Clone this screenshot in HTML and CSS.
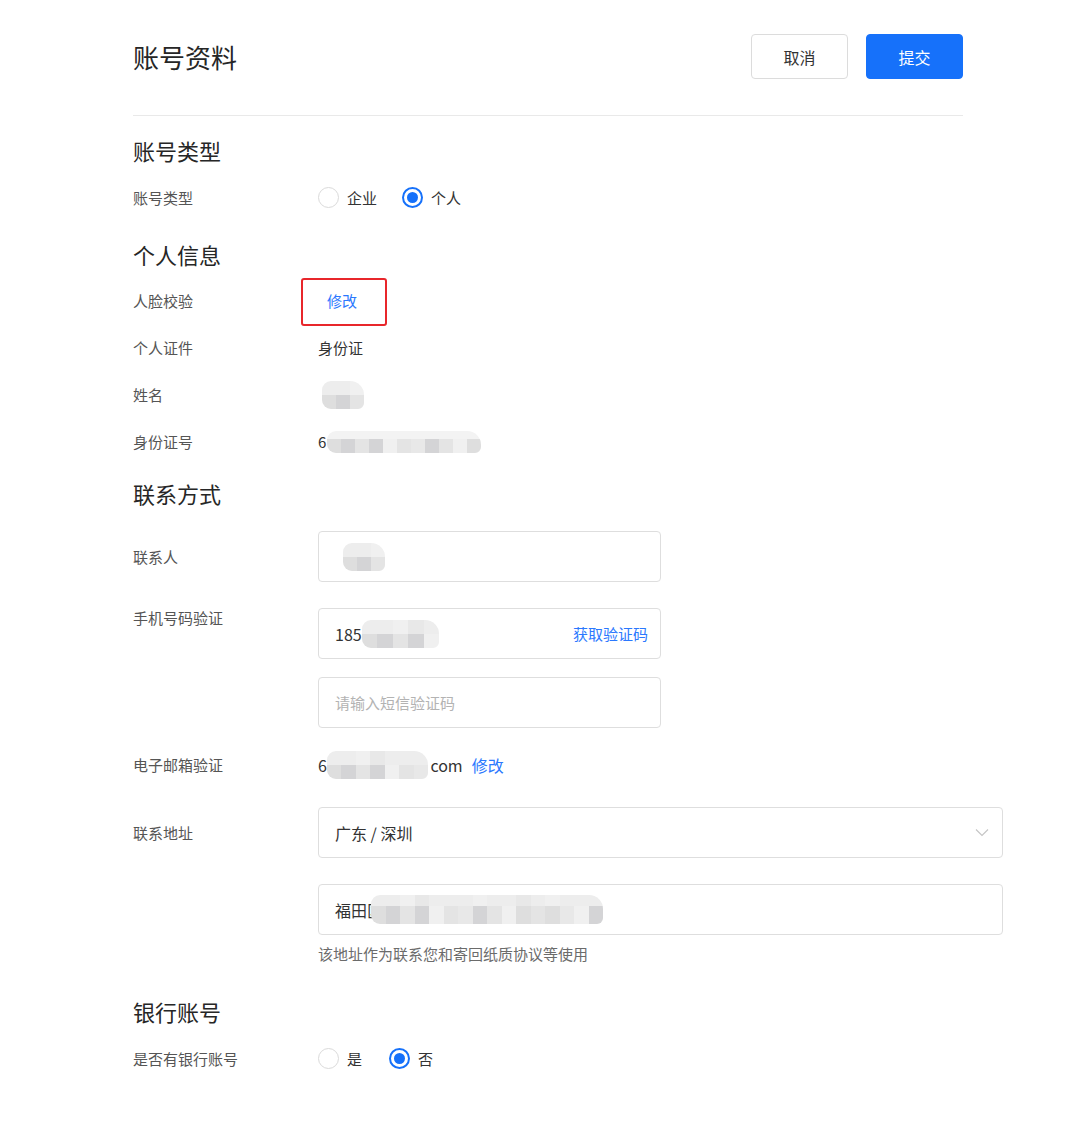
FILE: index.html
```html
<!DOCTYPE html>
<html lang="zh-CN">
<head>
<meta charset="utf-8">
<title>账号资料</title>
<link rel="stylesheet" href="styles.css">
</head>
<body>
<div class="page">
  <header class="header">
    <h1 class="title">账号资料</h1>
    <div class="actions">
      <button class="btn btn-default">取消</button>
      <button class="btn btn-primary">提交</button>
    </div>
  </header>
  <div class="divider"></div>

  <h2 class="section-title s1">账号类型</h2>
  <div class="row">
    <div class="label">账号类型</div>
    <div class="value radios">
      <label class="radio"><span class="dot"></span>企业</label>
      <label class="radio checked"><span class="dot"></span>个人</label>
    </div>
  </div>

  <h2 class="section-title s2">个人信息</h2>
  <div class="info">
    <div class="row">
      <div class="label">人脸校验</div>
      <div class="value"><span class="mark"><a class="link">修改</a><span class="mark-box"></span></span></div>
    </div>
    <div class="row">
      <div class="label">个人证件</div>
      <div class="value">身份证</div>
    </div>
    <div class="row">
      <div class="label">姓名</div>
      <div class="value"><span class="mosaic m3"><i></i><i></i><i></i><i></i><i></i><i></i></span></div>
    </div>
    <div class="row">
      <div class="label">身份证号</div>
      <div class="value">6<span class="mosaic m11 flat"><i></i><i></i><i></i><i></i><i></i><i></i><i></i><i></i><i></i><i></i><i></i><i></i><i></i><i></i><i></i><i></i><i></i><i></i><i></i><i></i><i></i><i></i></span></div>
    </div>
  </div>

  <h2 class="section-title s3">联系方式</h2>
  <div class="form-row r-contact">
    <div class="label lh-mid">联系人</div>
    <div class="field">
      <div class="input"><span class="mosaic m3"><i></i><i></i><i></i><i></i><i></i><i></i></span></div>
    </div>
  </div>
  <div class="form-row r-phone">
    <div class="label lh-top">手机号码验证</div>
    <div class="field stack">
      <div class="input"><span class="txt">185</span><span class="mosaic m5"><i></i><i></i><i></i><i></i><i></i><i></i><i></i><i></i><i></i><i></i></span><a class="link suffix">获取验证码</a></div>
      <div class="input"><span class="placeholder">请输入短信验证码</span></div>
    </div>
  </div>
  <div class="form-row r-email">
    <div class="label lh-top">电子邮箱验证</div>
    <div class="value email">6<span class="mosaic m7"><i></i><i></i><i></i><i></i><i></i><i></i><i></i><i></i><i></i><i></i><i></i><i></i><i></i><i></i></span>com<a class="link">修改</a></div>
  </div>
  <div class="form-row r-address">
    <div class="label lh-mid">联系地址</div>
    <div class="field wide stack">
      <div class="input select"><span class="txt">广东 / 深圳</span>
        <svg class="chev" width="14" height="9" viewBox="0 0 14 9"><path d="M1 1.5 L7 7.5 L13 1.5" fill="none" stroke="#c4c4c4" stroke-width="1.1"/></svg>
      </div>
      <div class="input"><span class="txt">福田区</span><span class="mosaic m16 over"><i></i><i></i><i></i><i></i><i></i><i></i><i></i><i></i><i></i><i></i><i></i><i></i><i></i><i></i><i></i><i></i><i></i><i></i><i></i><i></i><i></i><i></i><i></i><i></i><i></i><i></i><i></i><i></i><i></i><i></i><i></i><i></i></span></div>
    </div>
  </div>
  <div class="hint">该地址作为联系您和寄回纸质协议等使用</div>

  <h2 class="section-title s4">银行账号</h2>
  <div class="row">
    <div class="label">是否有银行账号</div>
    <div class="value radios tight">
      <label class="radio"><span class="dot"></span>是</label>
      <label class="radio checked"><span class="dot"></span>否</label>
    </div>
  </div>
</div>
</body>
</html>
```

FILE: styles.css
```css
* { box-sizing: border-box; }
html, body { margin: 0; padding: 0; background: #fff; }
body {
  font-family: "Microsoft YaHei", "Noto Sans CJK SC", "Noto Sans", sans-serif;
  color: #333;
  font-size: 15px;
}
.page {
  width: 830px;
  margin-left: 133px;
  padding-top: 34px;
  padding-bottom: 40px;
}
.header {
  display: flex;
  justify-content: space-between;
  align-items: center;
  height: 45px;
}
.title {
  margin: 0;
  font-size: 26px;
  font-weight: 400;
  color: #262626;
  line-height: 45px;
}
.actions { display: flex; gap: 18px; }
.btn {
  width: 97px;
  height: 45px;
  border-radius: 4px;
  font-family: inherit;
  font-size: 16px;
  cursor: pointer;
}
.btn-default { background: #fff; border: 1px solid #dcdcdc; color: #333; }
.btn-primary { background: #1671fa; border: 1px solid #1671fa; color: #fff; }
.divider { height: 1px; background: #e9e9e9; margin-top: 36px; }

.section-title {
  margin: 0;
  font-size: 22px;
  font-weight: 400;
  color: #262626;
  line-height: 30px;
}
.s1 { margin-top: 19px; }
.s2 { margin-top: 18px; }
.s3 { margin-top: 13px; }
.s4 { margin-top: 32px; }

.row {
  display: flex;
  align-items: center;
  height: 47px;
  margin-top: 9px;
}
.info .row { margin-top: 0; }
.info { margin-top: 8px; }
.label {
  width: 185px;
  flex: none;
  color: #555;
  font-size: 15px;
  line-height: 20px;
}
.value { font-size: 15px; color: #333; display: flex; align-items: center; }

.radios { gap: 25px; }
.radios.tight { gap: 27px; }
.radio { display: flex; align-items: center; gap: 8px; color: #333; }
.dot {
  width: 21px; height: 21px;
  border-radius: 50%;
  border: 1px solid #dadada;
  background: #fff;
  display: inline-block;
  position: relative;
}
.radio.checked .dot { border: 2px solid #1671fa; }
.radio.checked .dot::after {
  content: "";
  position: absolute;
  left: 50%; top: 50%;
  width: 11px; height: 11px;
  margin: -5.5px 0 0 -5.5px;
  border-radius: 50%;
  background: #1671fa;
}

.link { color: #2b78fe; text-decoration: none; cursor: pointer; }
.mark { position: relative; display: inline-block; padding-left: 9px; }
.mark-box {
  position: absolute;
  left: -17px; top: -12px;
  width: 86px; height: 48px;
  border: 2px solid #e8262b;
  border-radius: 3px;
}

/* mosaic placeholders for blurred personal data */
.mosaic {
  display: inline-grid;
  grid-template-rows: 14px 14px;
  grid-auto-flow: column;
  grid-auto-columns: 14px;
  border-radius: 9px 14px 6px 9px;
  overflow: hidden;
  filter: blur(0.6px);
  vertical-align: middle;
}
.mosaic i { display: block; background: #ededed; }
.mosaic i:nth-child(2n) { background: #dedede; }
.mosaic i:nth-child(4n) { background: #d4d4d6; }
.mosaic i:nth-child(6n) { background: #e4e4e4; }
.mosaic i:nth-child(5n) { background: #f0f0f0; }
.mosaic i:nth-child(7n) { background: #e8e8e8; }
.mosaic.m3 { margin-left: 4px; }
.mosaic.flat { grid-template-rows: 8px 14px; margin-left: 1px; }
.mosaic.flat i:nth-child(2n+1) { background: #f3f3f3; }
.mosaic.m5 { margin-left: 0; grid-auto-columns: 15.5px; }
.mosaic.m7 { grid-auto-columns: 14.5px; margin-right: 2px; }
.mosaic.over { margin-left: -12px; grid-auto-columns: 14.5px; grid-template-rows: 11px 18px; }

/* form */
.form-row { display: flex; align-items: flex-start; }
.r-contact { margin-top: 23px; }
.r-phone { margin-top: 26px; }
.r-email { margin-top: 27px; height: 20px; align-items: center; }
.r-address { margin-top: 32px; }
.lh-mid { line-height: 51px; }
.lh-top { line-height: 20px; }
.field { width: 343px; flex: none; }
.field.wide { width: 685px; }
.stack { display: flex; flex-direction: column; gap: 18px; }
.r-address .stack { gap: 26px; }
.input {
  height: 51px;
  border: 1px solid #dedede;
  border-radius: 4px;
  display: flex;
  align-items: center;
  padding: 0 12px 0 16px;
  font-size: 16px;
  color: #333;
  background: #fff;
}
.r-contact .input { padding-left: 20px; }
.placeholder { color: #b3b3b3; font-size: 15px; }
.suffix { margin-left: auto; font-size: 15px; }
.select .chev { margin-left: auto; margin-right: 1px; }
.email { font-size: 16px; color: #333; }
.email .link { margin-left: 9px; }
.hint {
  margin-left: 185px;
  margin-top: 9px;
  line-height: 20px;
  font-size: 15px;
  color: #6b6b6b;
}
```
